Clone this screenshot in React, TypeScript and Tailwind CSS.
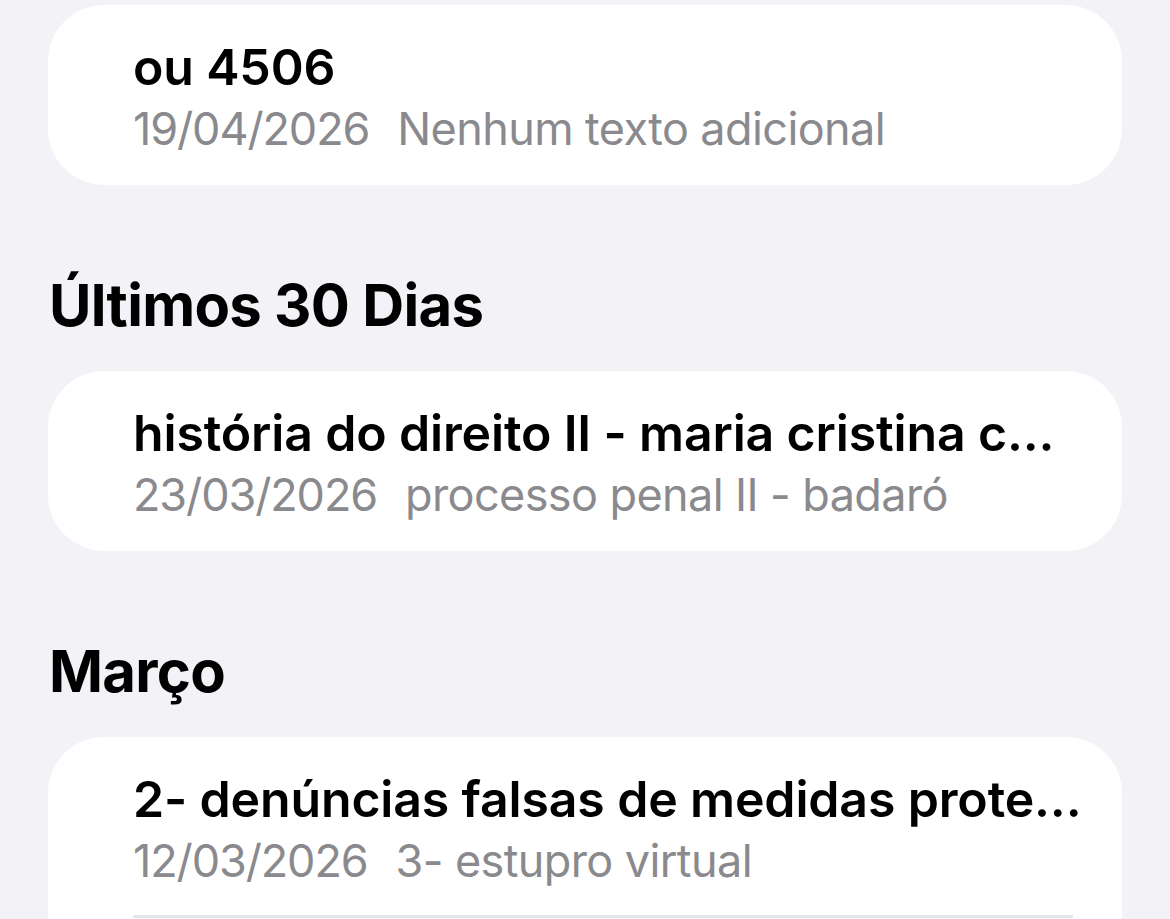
import React from 'react';

type Note = {
  title: string;
  date: string;
  preview: string;
};

const font = { fontFamily: 'Inter, "Noto Sans", sans-serif' };

function NoteRow({ note, separator }: { note: Note; separator?: boolean }) {
  return (
    <div className="pl-[85px] pr-[36px] pt-[32px]">
      <div className="text-[50px] leading-[60px] font-semibold text-black whitespace-nowrap overflow-hidden tracking-[-0.15px]">
        {note.title}
      </div>
      <div className="mt-[2px] flex text-[45px] leading-[60px] text-[#8a8a8e] whitespace-nowrap overflow-hidden">
        <span className="tracking-[-1.1px]">{note.date}</span>
        <span className="ml-[28px] tracking-[-0.6px]">{note.preview}</span>
      </div>
      {separator ? <div className="mt-[24px] mr-[13px] h-[3px] bg-[#e5e5ea]" /> : <div className="h-[26px]" />}
    </div>
  );
}

function SectionHeader({ children }: { children: React.ReactNode }) {
  return (
    <h2 className="mt-[85px] mb-[31px] pl-[1px] text-[58px] leading-[70px] font-bold text-black tracking-[-0.7px]">
      {children}
    </h2>
  );
}

export default function App() {
  return (
    <div className="h-screen overflow-hidden bg-[#f2f2f7] px-[48px] pt-[5px]" style={font}>
      <div className="bg-white rounded-[56px] h-[180px]">
        <NoteRow note={{ title: 'ou 4506', date: '19/04/2026', preview: 'Nenhum texto adicional' }} />
      </div>

      <SectionHeader>Últimos 30 Dias</SectionHeader>
      <div className="bg-white rounded-[56px] h-[180px]">
        <NoteRow
          note={{
            title: 'história do direito II - maria cristina c...',
            date: '23/03/2026',
            preview: 'processo penal II - badaró',
          }}
        />
      </div>

      <SectionHeader>Março</SectionHeader>
      <div className="bg-white rounded-t-[56px] pb-[200px]">
        <NoteRow
          separator
          note={{
            title: '2- denúncias falsas de medidas prote...',
            date: '12/03/2026',
            preview: '3- estupro virtual',
          }}
        />
      </div>
    </div>
  );
}
